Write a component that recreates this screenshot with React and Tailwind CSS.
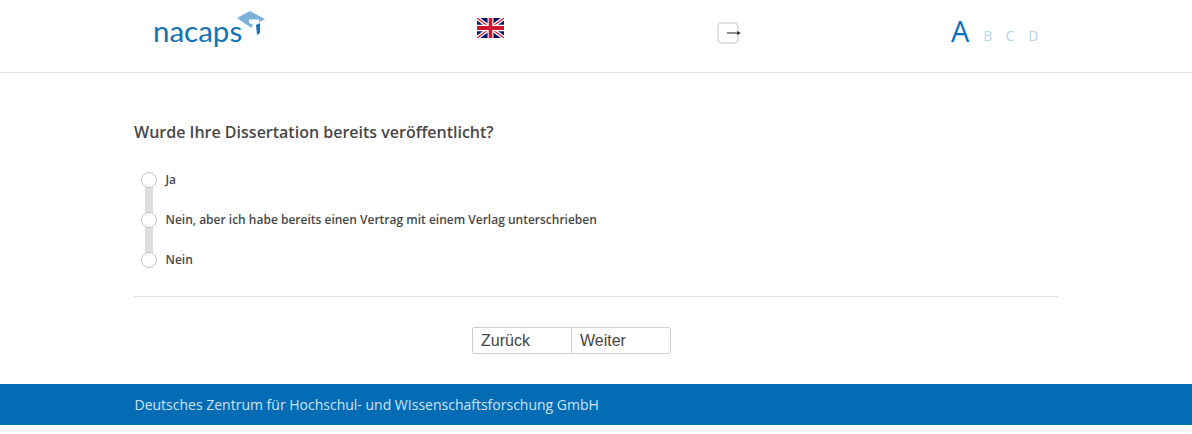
const options = ['Ja', 'Nein, aber ich habe bereits einen Vertrag mit einem Verlag unterschrieben', 'Nein'];

function Flag() {
  return (
    <svg width="27" height="20" viewBox="0 0 60 40" preserveAspectRatio="none">
      <rect width="60" height="40" fill="#00126b" />
      <path d="M0 0L60 40M60 0L0 40" stroke="#fff" strokeWidth="8" />
      <path d="M0 0L60 40M60 0L0 40" stroke="#cf142b" strokeWidth="2.5" />
      <path d="M30 0V40M0 20H60" stroke="#fff" strokeWidth="13" />
      <path d="M30 0V40M0 20H60" stroke="#cf142b" strokeWidth="8" />
    </svg>
  );
}

function ExitIcon() {
  return (
    <svg width="25" height="23" viewBox="0 0 25 23" fill="none">
      <rect x="1" y="1" width="20" height="20" rx="3.5" stroke="#d8d8d8" strokeWidth="1.5" fill="#fff" />
      <path d="M10 11H21" stroke="#444" strokeWidth="1.2" />
      <path d="M20 9L24 11L20 13Z" fill="#333" />
    </svg>
  );
}

function Logo() {
  return (
    <div className="relative w-[114px] h-[40px]">
      <span className="absolute left-0 top-[4px] text-[29.5px] leading-[36px] text-[#1272b4] font-['Lato',sans-serif]">nacaps</span>
      <svg className="absolute left-[82px] top-[1px]" width="32" height="26" viewBox="0 0 32 26">
        <path d="M2 8L15 1L30 9L24 12.5L24 9.5L14 9.5L14 13L18 14.5L16.5 18Z" fill="#7cb2da" />
        <path d="M21 15L25 13L25 23L22 25Z" fill="#1b75b5" />
      </svg>
    </div>
  );
}

export default function App() {
  return (
    <div className="w-[1192px] font-['Open_Sans',sans-serif] bg-white">
      {/* Header */}
      <header className="h-[73px] border-b border-[#dcdcdc] flex pl-[153px]">
        <div className="w-[324px] pt-[9px]"><Logo /></div>
        <div className="w-[240px] pt-[18px]"><Flag /></div>
        <div className="w-[234px] pt-[22px]"><ExitIcon /></div>
        <div className="flex items-baseline h-[44px] pt-[9px] text-[#0070c0]">
          <span className="text-[29px] leading-[44px] font-medium">A</span>
          <span className="ml-[14px] text-[14px] opacity-30 -translate-y-px">B</span>
          <span className="ml-[13px] text-[14px] opacity-30 -translate-y-px">C</span>
          <span className="ml-[14px] text-[14px] opacity-30 -translate-y-px">D</span>
        </div>
      </header>

      {/* Question */}
      <main className="mx-[134px] w-[924px]">
        <h1 className="mt-[48px] text-[16px] leading-[22px] font-semibold text-[#484848]">
          Wurde Ihre Dissertation bereits veröffentlicht?
        </h1>

        <div className="relative mt-[17px] pl-[7px] pb-[16px] border-b border-[#dcdcdc]">
          <div className="absolute left-[11px] top-[20px] w-[8px] h-[80px] bg-[#dedede]" />
          {options.map((o) => (
            <label key={o} className="relative flex items-center h-[40px] gap-[8.5px]">
              <span className="w-[16px] h-[16px] rounded-full bg-white border border-[#c8c8c8]" />
              <span className="text-[12px] font-semibold text-[#484848]">{o}</span>
            </label>
          ))}
        </div>

        <div className="flex justify-center mt-[30px] mr-[49px] font-['Liberation_Sans',sans-serif] text-[16px] text-[#444]">
          <div className="flex h-[27px] border border-[#cfcfcf] rounded-[2px]">
            <button className="w-[99px] text-left pl-[8px] border-r border-[#cfcfcf]">Zurück</button>
            <button className="w-[98px] text-left pl-[8px]">Weiter</button>
          </div>
        </div>
      </main>

      {/* Footer */}
      <footer className="mt-[30px] mb-[9px] h-[41px] bg-[#036cb5] flex items-center pl-[134.5px] text-[14px] text-[#cfe3f3]">
        Deutsches Zentrum für Hochschul- und WIssenschaftsforschung GmbH
      </footer>
    </div>
  );
}
